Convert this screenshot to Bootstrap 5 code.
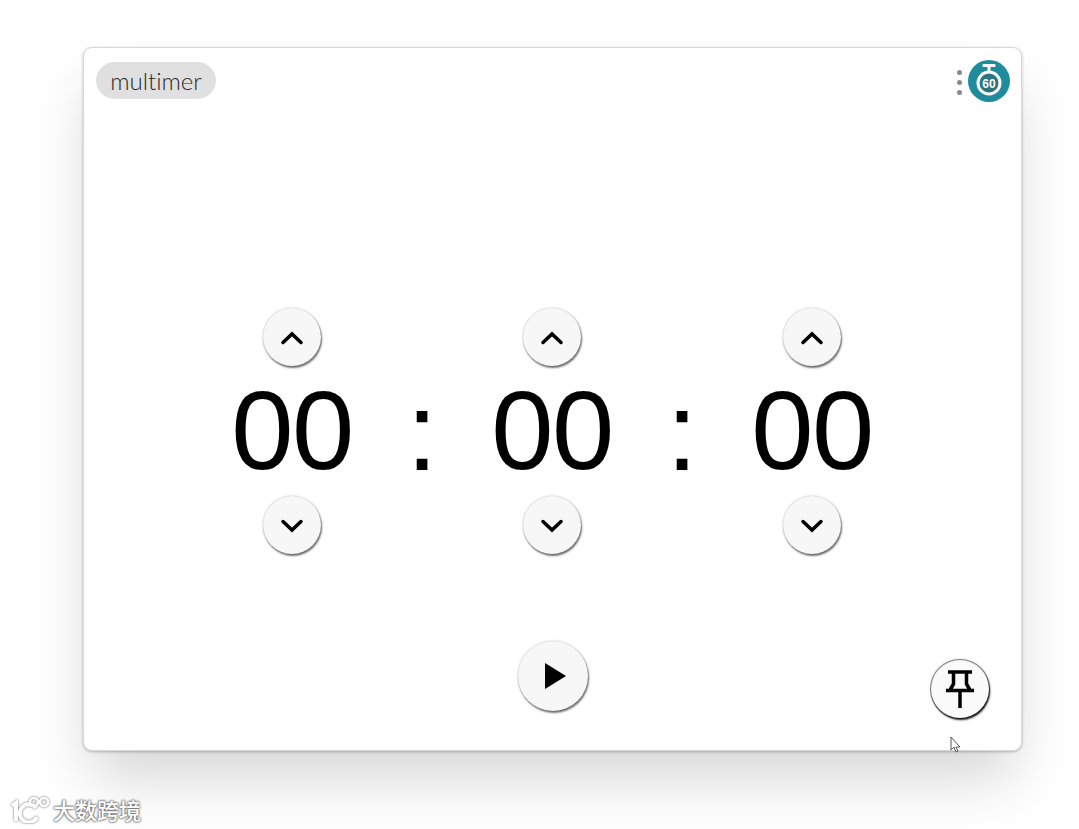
<!DOCTYPE html>
<html lang="en">
<head>
  <meta charset="UTF-8" />
  <title>multimer</title>
  <link rel="stylesheet" href="https://cdn.jsdelivr.net/npm/bootstrap@5.3.0/dist/css/bootstrap.min.css" />
  <style>
    body {
      background: #fff;
      font-family: "Liberation Sans", sans-serif;
      height: 829px;
      overflow: hidden;
    }
    .timer-window {
      width: 939px;
      height: 704px;
      margin: 47px 0 0 83px;
      background: #fff;
      border: 1px solid #d8d8d8;
      border-radius: 9px;
      box-shadow: 0 1px 3px rgba(0,0,0,.25), 0 34px 60px -8px rgba(0,0,0,.17);
    }
    .timer-head {
      padding: 14px 11px 0 12px;
      height: 260px;
    }
    .timer-row {
      padding-right: 1px;
    }
    .name-pill {
      width: 120px;
      height: 37px;
      background: #e0e0e0;
      border-radius: 19px;
      color: #2a2a2a;
      font: 300 24px Lato, sans-serif;
      font-variant-ligatures: none;
    }
    .menu-dots {
      width: 5px;
      gap: 5px;
      margin-right: 6px;
      margin-top: 8px;
    }
    .menu-dots span {
      width: 5px;
      height: 5px;
      border-radius: 50%;
      background: #8a8a8a;
    }
    .app-logo {
      width: 42px;
      height: 42px;
      margin-top: -2px;
    }
    .unit-col {
      width: 120px;
    }
    .colon-col {
      width: 140px;
      font-size: 112px;
      line-height: 130px;
      color: #000;
      text-align: center;
      padding-top: 59px;
    }
    .digits {
      font-size: 112px;
      line-height: 130px;
      letter-spacing: -1.5px;
      color: #000;
      white-space: nowrap;
    }
    .round-btn {
      padding: 0;
      border: 0;
      border-radius: 50%;
      background: #f7f7f7;
      box-shadow: 1px 2px 2px rgba(0,0,0,.55), 0 0 2px rgba(0,0,0,.3);
    }
    .step-btn {
      width: 58px;
      height: 58px;
    }
    .play-btn {
      width: 70px;
      height: 70px;
      margin-top: 87px;
      padding-left: 4px;
    }
    .pin-btn {
      position: absolute;
      right: 32px;
      bottom: 32px;
      width: 58px;
      height: 58px;
      background: #fafafa;
      box-shadow: 1px 2px 2px rgba(0,0,0,.9), 0 0 1px 1px rgba(0,0,0,.55);
    }
    .cursor-mark {
      position: absolute;
      left: 950px;
      top: 736px;
    }
    .watermark {
      position: absolute;
      left: 9px;
      top: 793px;
      gap: 2px;
      color: #fff;
      font: 500 22px "Noto Sans CJK SC", sans-serif;
      line-height: 32px;
      text-shadow: 0 0 2px #666, 0 0 2px #666, 0 0 3px #888;
    }
  </style>
</head>
<body>
  <div class="timer-window position-relative">
    <!-- header -->
    <div class="timer-head d-flex justify-content-between align-items-start">
      <div class="name-pill d-flex align-items-center justify-content-center">multimer</div>
      <div class="d-flex align-items-start">
        <div class="menu-dots d-flex flex-column"><span></span><span></span><span></span></div>
        <svg class="app-logo" viewBox="0 0 42 42">
          <circle cx="21" cy="21" r="21" fill="#1e8c9b"/>
          <rect x="14.500" y="4" width="13" height="3" rx="1" fill="#fff"/>
          <rect x="19.500" y="6" width="3" height="6" fill="#fff"/>
          <circle cx="21" cy="23" r="11" fill="#2c7480" stroke="#fff" stroke-width="3"/>
          <text x="21" y="28" text-anchor="middle" font-family="Liberation Sans" font-weight="700" font-size="12" fill="#fff">60</text>
        </svg>
      </div>
    </div>

    <!-- hours, minutes, seconds -->
    <div class="timer-row d-flex justify-content-center">
      <div class="unit-col d-flex flex-column align-items-center">
        <button class="round-btn step-btn"><svg width="24" height="16" viewBox="0 0 24 16"><path d="M3 12.500 12 4l9 8.500" fill="none" stroke="#000" stroke-width="3.500" stroke-linecap="round"/></svg></button>
        <div class="digits">00</div>
        <button class="round-btn step-btn"><svg width="24" height="16" viewBox="0 0 24 16"><path d="M3 3.500l9 8.500 9-8.500" fill="none" stroke="#000" stroke-width="3.500" stroke-linecap="round"/></svg></button>
      </div>
      <div class="colon-col">:</div>
      <div class="unit-col d-flex flex-column align-items-center">
        <button class="round-btn step-btn"><svg width="24" height="16" viewBox="0 0 24 16"><path d="M3 12.500 12 4l9 8.500" fill="none" stroke="#000" stroke-width="3.500" stroke-linecap="round"/></svg></button>
        <div class="digits">00</div>
        <button class="round-btn step-btn"><svg width="24" height="16" viewBox="0 0 24 16"><path d="M3 3.500l9 8.500 9-8.500" fill="none" stroke="#000" stroke-width="3.500" stroke-linecap="round"/></svg></button>
      </div>
      <div class="colon-col">:</div>
      <div class="unit-col d-flex flex-column align-items-center">
        <button class="round-btn step-btn"><svg width="24" height="16" viewBox="0 0 24 16"><path d="M3 12.500 12 4l9 8.500" fill="none" stroke="#000" stroke-width="3.500" stroke-linecap="round"/></svg></button>
        <div class="digits">00</div>
        <button class="round-btn step-btn"><svg width="24" height="16" viewBox="0 0 24 16"><path d="M3 3.500l9 8.500 9-8.500" fill="none" stroke="#000" stroke-width="3.500" stroke-linecap="round"/></svg></button>
      </div>
    </div>

    <div class="d-flex justify-content-center">
      <button class="round-btn play-btn"><svg width="24" height="28" viewBox="0 0 24 28"><path d="M2 1 23 14 2 27z" fill="#000"/></svg></button>
    </div>

    <button class="round-btn pin-btn">
      <svg width="28" height="40" viewBox="0 0 28 40"><path d="M2 3H26M7.500 3V15L4 21M20.500 3V15L24 21M0 21.500H28M14 21.500V39" fill="none" stroke="#000" stroke-width="3.500"/></svg>
    </button>
  </div>

  <svg class="cursor-mark" width="14" height="18" viewBox="0 0 14 18"><path d="M1 1v13l3-3 2 5 2-1-2-4h4z" fill="#fff" stroke="#555"/></svg>

  <div class="watermark d-flex align-items-center">
    <svg width="42" height="28" viewBox="0 0 42 28" fill="none" stroke="#fff" stroke-width="4" style="filter:drop-shadow(0 0 1px #666)">
      <path d="M3 11l4-3v18M27 13a9 9 0 1 0 1 9"/>
      <circle cx="25" cy="7" r="4" stroke-width="2.500"/><circle cx="35" cy="7" r="4" stroke-width="2.500"/>
    </svg>
    <span>大数跨境</span>
  </div>

  <script src="https://cdn.jsdelivr.net/npm/bootstrap@5.3.0/dist/js/bootstrap.bundle.min.js"></script>
</body>
</html>
